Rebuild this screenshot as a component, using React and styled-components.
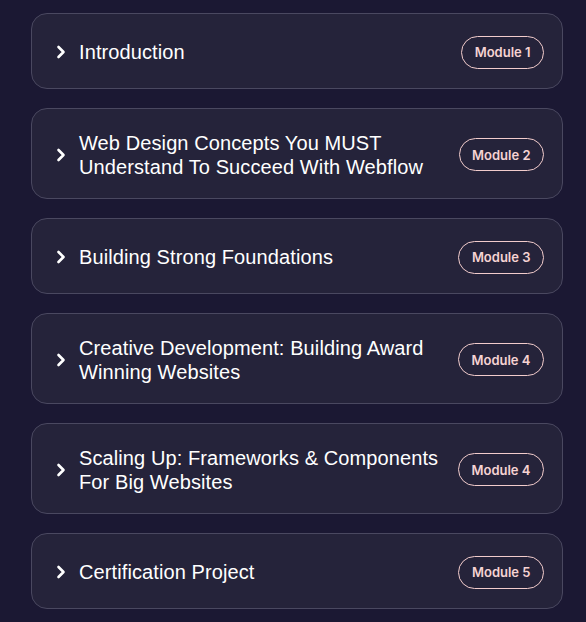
import React from "react";
import styled, { createGlobalStyle } from "styled-components";

const Global = createGlobalStyle`
  html, body { margin: 0; padding: 0; background: #1b1833; }
  body { font-family: "Liberation Sans", Arial, sans-serif; -webkit-font-smoothing: antialiased; }
`;

const Page = styled.div`
  min-height: 622px;
  box-sizing: border-box;
  padding: 13px 23px 0 31px;
  display: flex;
  flex-direction: column;
  gap: 19px;
  background: #1b1833;
`;

const Card = styled.div`
  display: flex;
  align-items: center;
  gap: 13px;
  box-sizing: border-box;
  padding: 21.5px 18px 19.5px 23px;
  min-height: 76px;
  background: #25233a;
  border: 1px solid #4a4860;
  border-radius: 16px;
`;

const Chevron = styled.svg`
  flex: none;
  width: 11px;
  height: 14px;
`;

const Title = styled.div`
  flex: 1;
  color: #ffffff;
  font-family: "Liberation Sans", Arial, sans-serif;
  font-size: 20px;
  line-height: 24px;
  font-weight: 400;
  letter-spacing: 0.1px;
`;

const Badge = styled.div`
  flex: none;
  box-sizing: border-box;
  height: 33px;
  padding: 0 12.5px;
  display: flex;
  align-items: center;
  border: 1.5px solid #f2cccc;
  border-radius: 999px;
  color: #f6d3d3;
  font-family: Inter, "Liberation Sans", sans-serif;
  font-size: 13px;
  font-weight: 600;
`;

const modules = [
  ["Introduction", "Module 1"],
  ["Web Design Concepts You MUST Understand To Succeed With Webflow", "Module 2"],
  ["Building Strong Foundations", "Module 3"],
  ["Creative Development: Building Award Winning Websites", "Module 4"],
  ["Scaling Up: Frameworks & Components For Big Websites", "Module 4"],
  ["Certification Project", "Module 5"],
];

export default function App() {
  return (
    <>
      <Global />
      <Page>
        {modules.map(([title, badge], i) => (
          <Card key={i}>
            <Chevron viewBox="0 0 11 14">
              <path d="M3.5 2 L8.5 7 L3.5 12" fill="none" stroke="#fff" strokeWidth="2.6" strokeLinecap="round" strokeLinejoin="round" />
            </Chevron>
            <Title>{title}</Title>
            <Badge>{badge}</Badge>
          </Card>
        ))}
      </Page>
    </>
  );
}
